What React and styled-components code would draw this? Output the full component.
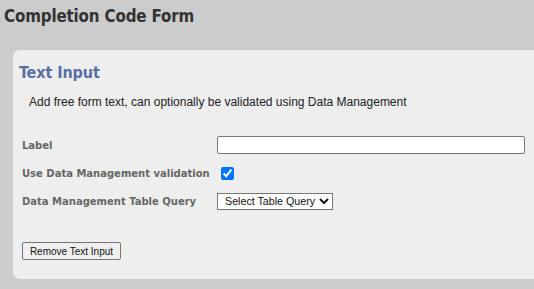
import React from "react";
import styled, { createGlobalStyle } from "styled-components";

const Global = createGlobalStyle`
  html, body { margin: 0; padding: 0; background: #cccccc; overflow: hidden; }
  body { font-family: "Liberation Sans", Arial, sans-serif; }
`;

const Page = styled.div`
  width: 534px;
  height: 289px;
  padding: 0;
  box-sizing: border-box;
`;

const Title = styled.h1`
  margin: 0;
  padding: 5px 0 0 4px;
  height: 30px;
  line-height: 23px;
  font-family: "DejaVu Sans Condensed", "DejaVu Sans", sans-serif;
  font-stretch: condensed;
  font-size: 16.8px;
  font-weight: bold;
  color: #333333;
  letter-spacing: -0.15px;
`;

const Panel = styled.section`
  margin: 15px -20px 0 13px;
  background: #eeeeee;
  border-radius: 7px;
  height: 229px;
  padding: 13px 0 0 6px;
  box-sizing: border-box;
`;

const Heading = styled.h2`
  margin: 0;
  height: 23px;
  font-family: "DejaVu Sans Condensed", "DejaVu Sans", sans-serif;
  font-stretch: condensed;
  font-size: 16px;
  font-weight: bold;
  color: #5a6ea6;
  letter-spacing: -0.1px;
`;

const Description = styled.p`
  margin: 9px 0 0 10px;
  font-family: "Liberation Sans", Arial, sans-serif;
  font-size: 12px;
  color: #222222;
`;

const Form = styled.div`
  margin: 22px 0 0 3px;
  display: grid;
  grid-template-columns: 195px 308px;
  grid-auto-rows: 28px;
  align-items: center;
`;

const Label = styled.label`
  font-family: "DejaVu Sans", Verdana, sans-serif;
  font-size: 10px;
  font-weight: bold;
  color: #666666;
`;

const TextField = styled.input`
  box-sizing: border-box;
  width: 308px;
  height: 18px;
  margin: 0;
  border: 1px solid #767676;
  border-radius: 2px;
  background: #ffffff;
`;

const Check = styled.input`
  display: block;
  width: 13px;
  height: 13px;
  margin: 0 0 0 4px;
  accent-color: #0075ff;
`;

const Select = styled.select`
  justify-self: start;
  box-sizing: border-box;
  height: 17px;
  width: 116px;
  margin: 0;
  padding: 0 0 0 3px;
  border: 1px solid #767676;
  border-radius: 0;
  background: #ffffff;
  font-family: "Liberation Sans", Arial, sans-serif;
  font-size: 10.7px;
  color: #111111;
`;

const Footer = styled.div`
  margin: 27px 0 0 3px;
`;

const Button = styled.button`
  display: block;
  box-sizing: border-box;
  height: 18px;
  width: 99px;
  padding: 0;
  border: 1px solid #767676;
  border-radius: 2px;
  background: #efefef;
  font-family: "Liberation Sans", Arial, sans-serif;
  font-size: 10px;
  color: #111111;
`;

export default function App() {
  return (
    <Page>
      <Global />
      <Title>Completion Code Form</Title>
      <Panel>
        <Heading>Text Input</Heading>
        <Description>
          Add free form text, can optionally be validated using Data Management
        </Description>
        <Form>
          <Label htmlFor="lbl">Label</Label>
          <TextField id="lbl" type="text" />
          <Label htmlFor="dm">Use Data Management validation</Label>
          <div>
            <Check id="dm" type="checkbox" defaultChecked />
          </div>
          <Label htmlFor="q">Data Management Table Query</Label>
          <Select id="q" defaultValue="">
            <option value="">Select Table Query</option>
          </Select>
        </Form>
        <Footer>
          <Button type="button">Remove Text Input</Button>
        </Footer>
      </Panel>
    </Page>
  );
}
